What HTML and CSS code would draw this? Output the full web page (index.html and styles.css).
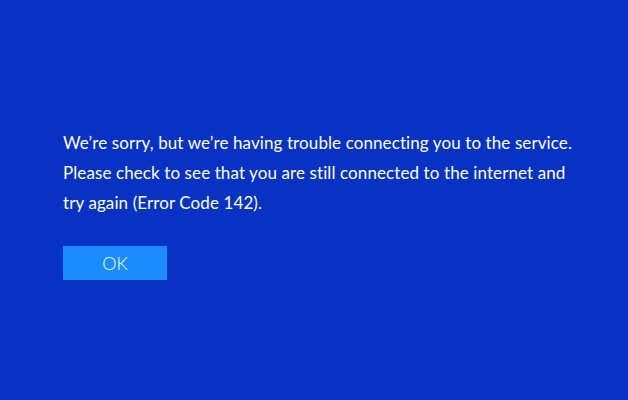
FILE: index.html
```html
<!DOCTYPE html>
<html>
<head>
<meta charset="utf-8">
<link rel="stylesheet" href="styles.css">
</head>
<body>
<main class="screen">
  <p class="message">We’re sorry, but we’re having trouble connecting you to the service. Please check to see that you are still connected to the internet and try again (Error Code 142).</p>
  <button class="ok">OK</button>
</main>
</body>
</html>
```
FILE: styles.css
```css
html, body {
  margin: 0;
  padding: 0;
  background: #0832c4;
}
.screen {
  width: 628px;
  height: 400px;
  box-sizing: border-box;
  padding: 128px 0 0 63px;
  display: flex;
  flex-direction: column;
  align-items: flex-start;
  font-family: Lato, "Noto Sans", sans-serif;
  font-variant-ligatures: none;
  color: #ffffff;
}
.message {
  margin: 0;
  width: 518px;
  font-size: 17px;
  line-height: 30px;
  letter-spacing: 0.1px;
}
.ok {
  margin-top: 28px;
  width: 104px;
  height: 34px;
  border: none;
  background: #1a8cff;
  color: #ffffff;
  font-family: Lato, "Noto Sans", sans-serif;
  font-size: 18px;
  font-weight: 300;
  padding: 0;
}
```
